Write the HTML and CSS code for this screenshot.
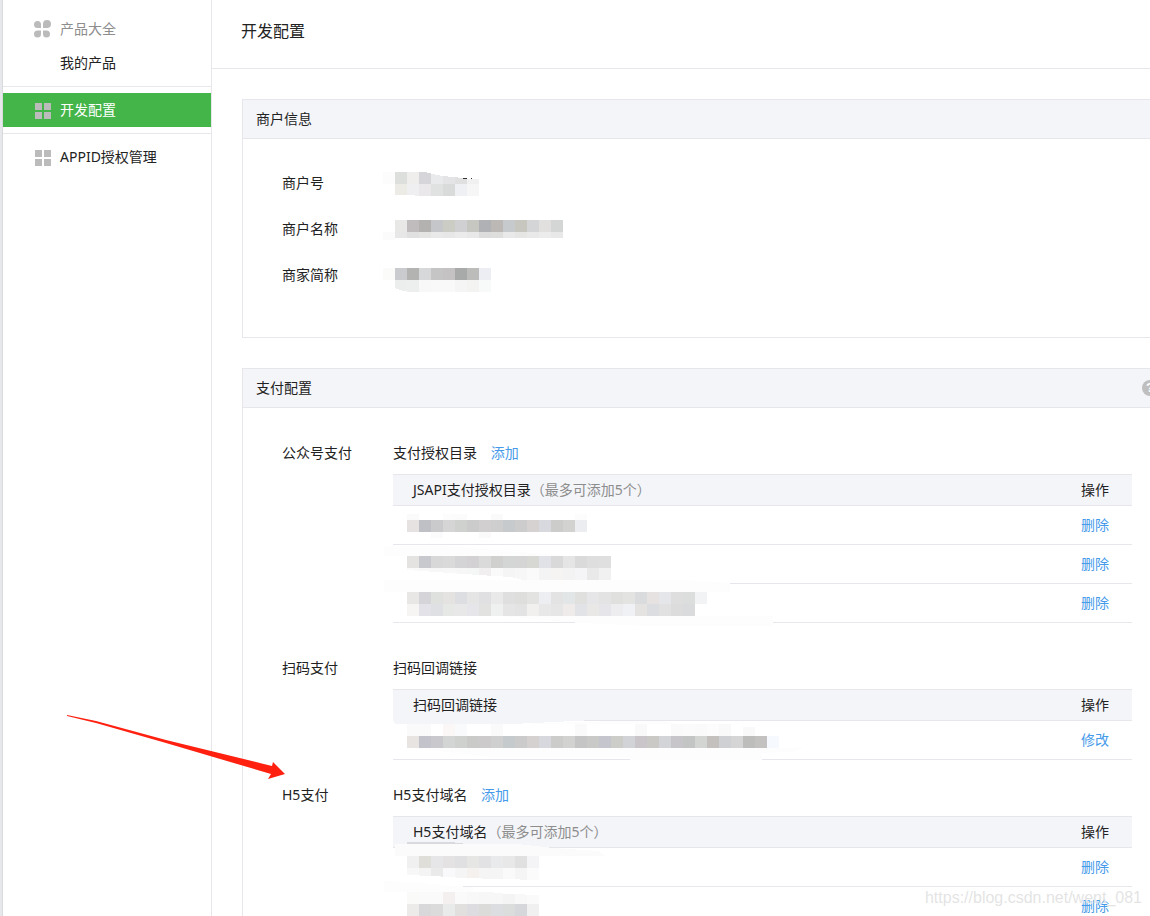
FILE: index.html
```html
<!DOCTYPE html>
<html lang="zh-CN">
<head>
<meta charset="utf-8">
<title>开发配置</title>
<link rel="stylesheet" href="styles.css">
</head>
<body>
<div class="page">
  <nav class="sidebar">
    <div class="nav-group">
      <h2 class="nav-title">
        <svg class="nav-icon" width="18" height="18" viewBox="0 0 18 18" aria-hidden="true"><path d="M3.500 1a3.500 3.500 0 1 0 0 7H7V4.500A3.500 3.500 0 0 0 3.500 1zM13 0A4 4 0 0 0 9 4v4h4a4 4 0 0 0 0-8zM3.500 10.500a3.500 3.500 0 1 0 3.500 3.500V10.500zM9 10.500v3.500a3.500 3.500 0 1 0 3.500-3.500z"/></svg>
        产品大全
      </h2>
      <a class="nav-link" href="#">我的产品</a>
    </div>
    <div class="nav-group nav-single">
      <a class="nav-link active" href="#">
        <svg class="nav-icon" width="18" height="18" viewBox="0 0 18 18" aria-hidden="true"><path d="M1 2h7v7H1zM10 2h7v7h-7zM1 11h7v7H1zM10 11h7v7h-7z"/></svg>
        开发配置
      </a>
    </div>
    <div class="nav-group nav-single">
      <a class="nav-link" href="#">
        <svg class="nav-icon" width="18" height="18" viewBox="0 0 18 18" aria-hidden="true"><path d="M1 2h7v7H1zM10 2h7v7h-7zM1 11h7v7H1zM10 11h7v7h-7z"/></svg>
        APPID授权管理
      </a>
    </div>
  </nav>

  <main class="main">
    <header class="page-header"><h1>开发配置</h1></header>

    <section class="panel">
      <header class="panel-header"><h2>商户信息</h2></header>
      <dl class="info">
        <div class="info-row">
          <dt>商户号</dt>
          <dd>
            <svg class="mosaic" aria-hidden="true">
              <g data-cells="-10 12 12 #fcfcfc|2 12 12 #dcdfdc #efeeec #d6d5da #e8eaeb #e4e3e5 #e0e0e0 #f1f1f1|2 24 12 #ecebe6 #efeff2 #eae8ea #e0e2e1 #d9dada #eff0f3 #f6f6f6"></g>
              <path class="paper" d="M30 11C37 14 48 16 59 17L70 18L71 19H88V11zM2 36h24l-8-1H2z"/>
              <path d="M69 18h5v1h-3zM77 19l2-1v1z" fill="#333"/>
            </svg>
          </dd>
        </div>
        <div class="info-row">
          <dt>商户名称</dt>
          <dd>
            <svg class="mosaic" aria-hidden="true">
              <g data-cells="-10 26 8 #fbfbfb|2 14 12 #e8e8e6 #c0bbbc #b3b2b0 #c5c6c9 #cbccc4 #d0d0d3 #c6c7c1 #b0b1b4 #bcb8b5 #c6cacd #c7c7bf #d3d5d7 #e1e0de #d4d6d5|2 26 6 #e7e7e7 #e0e0e1 #e4e4e2 #e9e9e9 #e7e7e7 #ebebeb #e8e8e8 #dcdcdd #dededd #e9e9ea #e6e6e5 #e9e9e9 #ececec #e8e8e8"></g>
            </svg>
          </dd>
        </div>
        <div class="info-row">
          <dt>商家简称</dt>
          <dd>
            <svg class="mosaic" aria-hidden="true">
              <g data-cells="-10 16 12 #fbfbf9|2 16 12 #c9cbce #b3b3b1 #d6d8d9 #c4c5c4 #c5c2c4 #a8a9a9 #bcbdba #edeef3|2 28 12 #eceeee #edeeee #f8f8f8 #f9f9f9 #f9f9f9 #f5f5f5 #f3f3f2 #f8f9f9"></g>
              <path class="paper" d="M2 36l8 3 8 1H2z"/>
            </svg>
          </dd>
        </div>
      </dl>
    </section>

    <section class="panel">
      <header class="panel-header">
        <h2>支付配置</h2>
        <button class="help" type="button" aria-label="帮助">?</button>
      </header>
      <div class="config">
        <div class="config-item">
          <h3>公众号支付</h3>
          <div class="config-body">
            <p class="config-title">支付授权目录 <a href="#">添加</a></p>
            <table>
              <thead><tr><th scope="col">JSAPI支付授权目录<span class="hint">（最多可添加5个）</span></th><th scope="col" class="action">操作</th></tr></thead>
              <tbody>
                <tr>
                  <td>
                    <svg class="mosaic" aria-hidden="true">
                      <g data-cells="14 8 6 #fafafa|50 8 6 #fcfcfc #fafbfa|98 8 6 #fbfafa|182 8 6 #fcfcfc|38 26 6 #fbfbfb|86 26 6 #fbfafb|14 14 12 #e6e2e1 #bfc0c6 #cacacd #d4d5d4 #cfd1ce #cacbca #d1cfd0 #cfcecf #c6cacc #cccccd #d6d2d2 #d8d9df #cccdcb #d2d2d0 #ecedf1"></g>
                    </svg>
                  </td>
                  <td class="action"><a href="#">删除</a></td>
                </tr>
                <tr>
                  <td>
                    <svg class="mosaic" aria-hidden="true">
                      <path class="smudge" d="M-9 1H50L140 8 170 10V11H-9z"/>
                      <g data-cells="14 11 12 #e4e3e1 #c8c9cf #d8d8d8 #dadada #d4d3d6 #d3d1d3 #dbdadb #d0d1cf #d3d6d5 #d4d5d4 #d7d7d4 #e1e2e7 #d9d9d9 #e5e5e5 #dadada #dedede #dfdfdf|14 23 12 #fafafa #f8f8f8 #f7f7f7 #f8f8f8 #f7f7f7 #f5f6f6 #f2eff0 #fafafa #f5f5f5 #f7f7f7 #fafafa #f4f4f4 #f5f4f3 #f3f3f3 #f5f5f8 #e9e9e9 #f1f1f1"></g>
                      <path class="paper" d="M14 25L86 30l32 2 12 3v4H0V25z"/>
                      <path class="smudge" d="M-9 35H290l47 3v9H-9z"/>
                    </svg>
                  </td>
                  <td class="action"><a href="#">删除</a></td>
                </tr>
                <tr>
                  <td>
                    <svg class="mosaic" aria-hidden="true">
                      <g data-cells="14 8 12 #e8e7e5 #d4d4d9 #dfe1df #e4e3e1 #dddee1 #e4e5e4 #e0e0e3 #e9e9e9 #dfdfdf #dedfdd #e3e3e1 #eceef2 #e3e3e3 #e2e6e6 #e0e0df #e6e6e8 #e3e3e3 #e0e1de #e3e3e1 #dadbdd #e5e2e1 #e5e6e9 #dedede #dcdedd #f1f3f5|14 20 12 #f6f5f4 #e2e2e8 #dfe0e4 #e6e8e6 #e8e8e8 #e6e6ea #e2e2e1 #eef1f0 #e4e5e4 #e3e3e4 #f1f0ee #e8e8e9 #e6e6e7 #efebea #e2e3e7 #e9e8e6 #e5e5ea #ededf0 #f0f1f4 #e4e3e2 #dcdde0 #e1e1e2 #dcdcdd #d9dbdd"></g>
                      <path class="smudge" d="M110 32H380v10H250L172 38z"/>
                    </svg>
                  </td>
                  <td class="action"><a href="#">删除</a></td>
                </tr>
              </tbody>
            </table>
          </div>
        </div>

        <div class="config-item">
          <h3>扫码支付</h3>
          <div class="config-body">
            <p class="config-title">扫码回调链接</p>
            <table>
              <thead><tr><th scope="col">扫码回调链接</th><th scope="col" class="action">操作</th></tr></thead>
              <tbody>
                <tr>
                  <td>
                    <svg class="mosaic" aria-hidden="true">
                      <path d="M0-2H222L120 3H2L0-1z" fill="#f4f5f9"/>
                      <path class="smudge" d="M222 0H270L285 3H122z"/>
                      <g data-cells="14 3 12 #fafafa #fafafa|50 3 12 #faf7f6 #f9fafc|98 3 12 #fafafa|182 3 12 #fafafa|242 3 12 #faf9f9|278 3 12 #fafafa #fbfbfb #fafafa #fcfcfc #f9f9f9|350 6 9 #f9f9f9|14 15 12 #e7e4e1 #c3c4cb #c9c9cd #d2d5d4 #cfd1ce #cacac9 #cdcacc #cfcfd0 #c5cacd #cbcbcb #d6d1d1 #d7d8de #cccdca #d2d2d0 #c5c5c5 #c9cac8 #c5c6cd #cccdc9 #d2d3d7 #cac5c8 #cbc9c5 #d2d4d8 #c7c5ca #c3c5c4 #d3d5d3 #c4c0be #cfd0d3 #d5d5d5 #bdbdbb #c3c2c0 #f6fafe"></g>
                      <path class="smudge" d="M18 27H412L398 31 369 32V39H237V36H100z"/>
                    </svg>
                  </td>
                  <td class="action"><a href="#">修改</a></td>
                </tr>
              </tbody>
            </table>
          </div>
        </div>

        <div class="config-item compact">
          <h3>H5支付</h3>
          <div class="config-body">
            <p class="config-title">H5支付域名 <a href="#">添加</a></p>
            <table>
              <thead><tr><th scope="col">H5支付域名<span class="hint">（最多可添加5个）</span></th><th scope="col" class="action">操作</th></tr></thead>
              <tbody>
                <tr>
                  <td>
                    <svg class="mosaic" aria-hidden="true">
                      <path d="M14-6h44l16 2H14z" fill="#d9dadf"/>
                      <path d="M2-4H125L160 0 205 3 213 8H2z" fill="#fbfbfb"/>
                      <g data-cells="14 8 12 #f0f0f0 #dfded8 #e6e5e7 #e4e2e3 #e0e0e2 #e6e6e4 #e2e2e4 #e8eaec #e8e8e8 #e0e0e1 #f4f4f7|14 20 12 #f7f7f7 #f4f4f4 #eaeaea #f9f9fb #f5f5f5 #f4f1ef #f5f5f5 #f5f5f5 #fafafa #f5f5f5 #fbfbfb"></g>
                      <path class="paper" d="M14 27L40 28l30 2 76 2v2H0v-7z"/>
                      <path class="smudge" d="M-9 33L20 34 60 38 80 39V44H-9z"/>
                    </svg>
                  </td>
                  <td class="action"><a href="#">删除</a></td>
                </tr>
                <tr>
                  <td>
                    <svg class="mosaic" aria-hidden="true">
                      <g data-cells="14 5 12 #fafaf9 #fafafa #fafafa #f3f0ef #fafafa #f8f8f8 #f7f7f7 #f7f7f7 #f4f4f4 #f8f8f8 #fafafa|14 17 12 #ecebea #d8d7d9 #dcdbdc #e8ebea #e1e0de #dddce0 #dbdcda #dcdde0 #dbdddc #d5d7da #f0f0f0"></g>
                      <path class="paper" d="M80 3h70v5l-36-1z"/>
                    </svg>
                  </td>
                  <td class="action"><a href="#">删除</a></td>
                </tr>
              </tbody>
            </table>
          </div>
        </div>
      </div>
    </section>
  </main>

  <svg class="arrow" width="220" height="66" viewBox="0 0 220 66" aria-hidden="true"><path d="M1 1L30 7 100 26 206 52 207 48 219 60 202 65 205 60 100 29 30 9 1 2z" fill="#ff2010"/></svg>
  <div class="watermark">https://blog.csdn.net/went_081</div>
</div>
<script src="mosaic.js"></script>
</body>
</html>
```
FILE: styles.css
```css
* { box-sizing: border-box; }

body {
  margin: 0;
  background: #fff;
  color: #222;
  font: 14px/20px "Noto Sans", "Noto Sans CJK SC", sans-serif;
}

h1, h2, h3, p, dl, dd { margin: 0; font-size: 14px; font-weight: 400; }
a { color: #459ae9; text-decoration: none; }

.page {
  position: relative;
  display: flex;
  height: 100vh;
  overflow: hidden;
  border-left: 2px solid #e7e8eb;
}

.sidebar {
  flex: none;
  width: 210px;
  border-left: 1px solid #d9dadc;
  border-right: 1px solid #e7e7eb;
}
.nav-group { padding: 12px 0 6px; border-bottom: 1px solid #e7e7eb; }
.nav-single { padding: 6px 0; }
.nav-group:last-child { border-bottom: 0; }
.nav-title, .nav-link {
  display: flex;
  align-items: center;
  height: 34px;
  padding-left: 57px;
}
.nav-title { color: #8d8d8d; }
.nav-link { color: #222; }
.nav-link.active { background: #44b549; color: #fff; }
.nav-icon { flex: none; width: 18px; margin-left: -26px; margin-right: 8px; fill: #bbb; }

.main { flex: 1; min-width: 0; }
.page-header { padding: 19px 29px 25px; border-bottom: 1px solid #e7e7eb; }
.page-header h1 { font-size: 16px; line-height: 24px; }

.panel {
  margin: 30px -22px 0 30px;
  border: 1px solid #e7e7eb;
}
.panel-header {
  display: flex;
  align-items: center;
  justify-content: space-between;
  height: 39px;
  padding: 0 13px;
  background: #f4f5f9;
  border-bottom: 1px solid #e7e7eb;
}
.help {
  width: 16px;
  height: 16px;
  padding: 0;
  border: 0;
  border-radius: 50%;
  background: #bfbfbf;
  color: #fff;
  font: bold 13px/16px "Liberation Sans", sans-serif;
}

.info { padding: 21px 39px 39px; }
.info-row { display: flex; line-height: 46px; }
.info dt, .config h3 { flex: none; width: 111px; }
.info dd { position: relative; flex: 1; }

.config { padding: 0 39px 24px; }
.config-item { display: flex; padding-top: 24px; }
.config-item.compact { padding-top: 14px; }
.config h3, .config-title { line-height: 42px; }
.config-body { flex: 1; }
.config-title a { margin-left: 10px; }

table { width: 100%; border-collapse: separate; border-spacing: 0; }
th {
  padding: 0 0 0 20px;
  background: #f4f5f9;
  border: solid #e7e7eb;
  border-width: 1px 0;
  font-weight: 400;
  line-height: 30px;
  text-align: left;
}
td {
  position: relative;
  padding: 0;
  border-bottom: 1px solid #e7e7eb;
  line-height: 38px;
}
th.action, td.action { width: 51px; padding: 0; }
.hint { color: #8d8d8d; }

.mosaic {
  position: absolute;
  top: 0;
  left: 0;
  width: 100%;
  height: 100%;
  overflow: visible;
  shape-rendering: crispEdges;
}
.paper { fill: #fff; }
.smudge { fill: #fdfdfd; }

.arrow { position: absolute; left: 64px; top: 714px; }
.watermark {
  position: absolute;
  right: 8px;
  bottom: 8px;
  color: rgba(215, 215, 215, .7);
  font: 16px/20px "Liberation Sans", sans-serif;
  text-shadow: 1px 1px 0 rgba(255, 255, 255, .8);
}
```
FILE: mosaic.js
```js
// Each run is "x y height colour colour ..."; runs are separated by "|".
const CELL = 12;
document.querySelectorAll('[data-cells]').forEach((group) => {
  group.dataset.cells.split('|').forEach((run) => {
    const [x, y, height, ...colours] = run.split(' ');
    colours.forEach((colour, i) => {
      const rect = document.createElementNS('http://www.w3.org/2000/svg', 'rect');
      rect.setAttribute('x', Number(x) + i * CELL);
      rect.setAttribute('y', y);
      rect.setAttribute('width', CELL);
      rect.setAttribute('height', height);
      rect.setAttribute('fill', colour);
      group.appendChild(rect);
    });
  });
});
```
